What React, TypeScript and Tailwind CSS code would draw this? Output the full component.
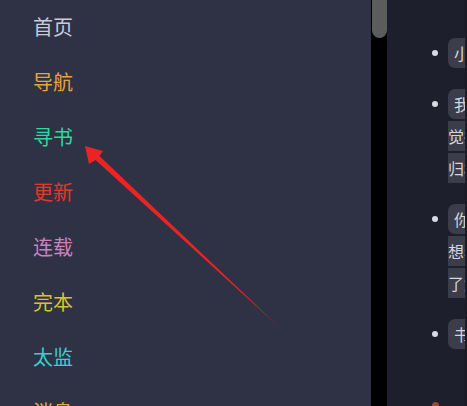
import React from 'react';

const menu = [
  { label: '首页', color: 'text-[#c9cbd9]' },
  { label: '导航', color: 'text-[#e9a23b]' },
  { label: '寻书', color: 'text-[#2fd89c]' },
  { label: '更新', color: 'text-[#e4372b]' },
  { label: '连载', color: 'text-[#c982c0]' },
  { label: '完本', color: 'text-[#d9c232]' },
  { label: '太监', color: 'text-[#3ccfd0]' },
  { label: '消息', color: 'text-[#e3a33f]' },
];

// each entry is an array of visual lines inside one inline tag
const notes: string[][] = [
  ['小提示：左侧菜单可以切换栏目'],
  ['我们的书库每天都会自动更新，', '觉得好看的书可以加入书架，', '归档后方便下次继续阅读。'],
  ['你也可以在寻书页面搜索，', '想看的书没有收录可以留言，', '了解更多请查看消息页面。'],
  ['书友交流请文明发言'],
];

const Arrow = () => (
  <svg className="absolute left-0 top-0 pointer-events-none" width="467" height="406" viewBox="0 0 467 406">
    <polygon
      points="85,146 103,151 99.5,156 277,325 95.5,160 89,164"
      fill="#ec2323"
    />
  </svg>
);

export default function App() {
  return (
    <div
      className="relative flex w-[467px] h-[406px] overflow-hidden bg-[#1e1f2c]"
      style={{ fontFamily: '"Noto Sans CJK SC", "Noto Sans", sans-serif' }}
    >
      <nav className="w-[371px] shrink-0 h-full bg-[#2f3245] pl-[33px] pt-0">
        <div className="-mt-[1px]">
          {menu.map(item => (
            <div key={item.label} className={`text-[20px] leading-[55px] ${item.color}`}>
              {item.label}
            </div>
          ))}
        </div>
      </nav>

      <div className="w-[16px] shrink-0 h-full bg-black flex justify-center">
        <div className="w-[15px] h-[38px] rounded-b-full bg-[#5b5d5c]" />
      </div>

      <main className="w-[78px] shrink-0 h-full overflow-hidden pl-[45px] pt-[37px] text-[16px] text-[#d3d4dc]">
        <div className="w-[400px]">
          {notes.map((lines, i) => (
            <div key={i} className="flex items-start gap-[10px] mb-[19px]">
              <span className="mt-[13px] w-[6px] h-[6px] rounded-full bg-[#d8d9e2] shrink-0" />
              <div className="leading-[32px]">
                <span className="bg-[#3b3d4b] rounded-[7px] px-[6px] py-[3px]">
                  {lines.map((l, j) => (
                    <React.Fragment key={j}>
                      {l}
                      {j < lines.length - 1 && <br />}
                    </React.Fragment>
                  ))}
                </span>
              </div>
            </div>
          ))}
          <div className="mt-[52px] w-[7px] h-[7px] rounded-full bg-[#a0452e]" />
        </div>
      </main>
      <div className="w-[2px] shrink-0 h-full bg-[#1a1b26]" />

      <Arrow />
    </div>
  );
}
